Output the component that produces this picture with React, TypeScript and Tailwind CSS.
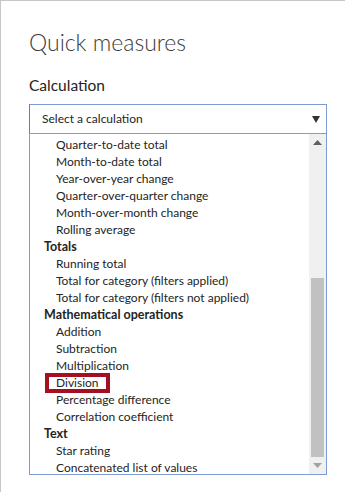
import React from "react";

type Row = { label: string; header?: boolean; marked?: boolean };

const rows: Row[] = [
  { label: "Quarter-to-date total" },
  { label: "Month-to-date total" },
  { label: "Year-over-year change" },
  { label: "Quarter-over-quarter change" },
  { label: "Month-over-month change" },
  { label: "Rolling average" },
  { label: "Totals", header: true },
  { label: "Running total" },
  { label: "Total for category (filters applied)" },
  { label: "Total for category (filters not applied)" },
  { label: "Mathematical operations", header: true },
  { label: "Addition" },
  { label: "Subtraction" },
  { label: "Multiplication" },
  { label: "Division", marked: true },
  { label: "Percentage difference" },
  { label: "Correlation coefficient" },
  { label: "Text", header: true },
  { label: "Star rating" },
  { label: "Concatenated list of values" },
];

const ScrollBar = () => (
  <div className="flex w-[17px] flex-col bg-[#f0f0f0]">
    {/* up arrow */}
    <div className="flex h-[17px] items-center justify-center">
      <svg width="9" height="5" viewBox="0 0 9 5">
        <path d="M0 5 L4.5 0 L9 5 Z" fill="#606060" />
      </svg>
    </div>
    <div className="h-[127px]" />
    {/* thumb */}
    <div className="mx-auto h-[179px] w-[13px] bg-[#c1c1c1]" />
    {/* down arrow */}
    <div className="flex flex-1 items-center justify-center">
      <svg width="9" height="5" viewBox="0 0 9 5">
        <path d="M0 0 L9 0 L4.5 5 Z" fill="#a3a3a3" />
      </svg>
    </div>
  </div>
);

export default function App() {
  return (
    <div className="h-[492px] w-[345px] overflow-hidden border-l border-t border-[#c6c6c6] bg-white pl-[28px] font-['Lato','Liberation_Sans',sans-serif] text-[#252423]">
      <h1 className="pt-[26px] text-[23px] font-light leading-[30px] text-[#3b3b3b]">
        Quick measures
      </h1>
      <div className="pt-[18px] text-[15.5px] leading-[20px] text-[#252423]">Calculation</div>

      <div className="mt-[9px] w-[298px]">
        {/* select */}
        <div className="flex h-[30px] items-center justify-between border border-[#7d9bd4] border-l-[#6a7f9f] pl-[12px] pr-[6px] text-[12px]">
          <span>Select a calculation</span>
          <svg width="8" height="8" viewBox="0 0 8 8">
            <path d="M0 1 L8 1 L4 8 Z" fill="#333" />
          </svg>
        </div>

        {/* list */}
        <div className="-mt-px flex h-[342px] overflow-hidden border border-[#7d9bd4]">
          <div className="flex-1 pt-[2px] text-[12px]">
            {rows.map((r) => (
              <div
                key={r.label}
                className={
                  r.header
                    ? "h-[17px] pl-[14px] text-[12.5px] font-bold leading-[17px]"
                    : "h-[17px] pl-[26px] leading-[17px]"
                }
              >
                {r.marked ? (
                  <span className="relative">
                    {r.label}
                    <span className="absolute -left-[11px] -right-[11px] top-[-2px] bottom-[-3px] border-4 border-[#a50f22]" />
                  </span>
                ) : (
                  r.label
                )}
              </div>
            ))}
          </div>
          <ScrollBar />
        </div>
      </div>
    </div>
  );
}
